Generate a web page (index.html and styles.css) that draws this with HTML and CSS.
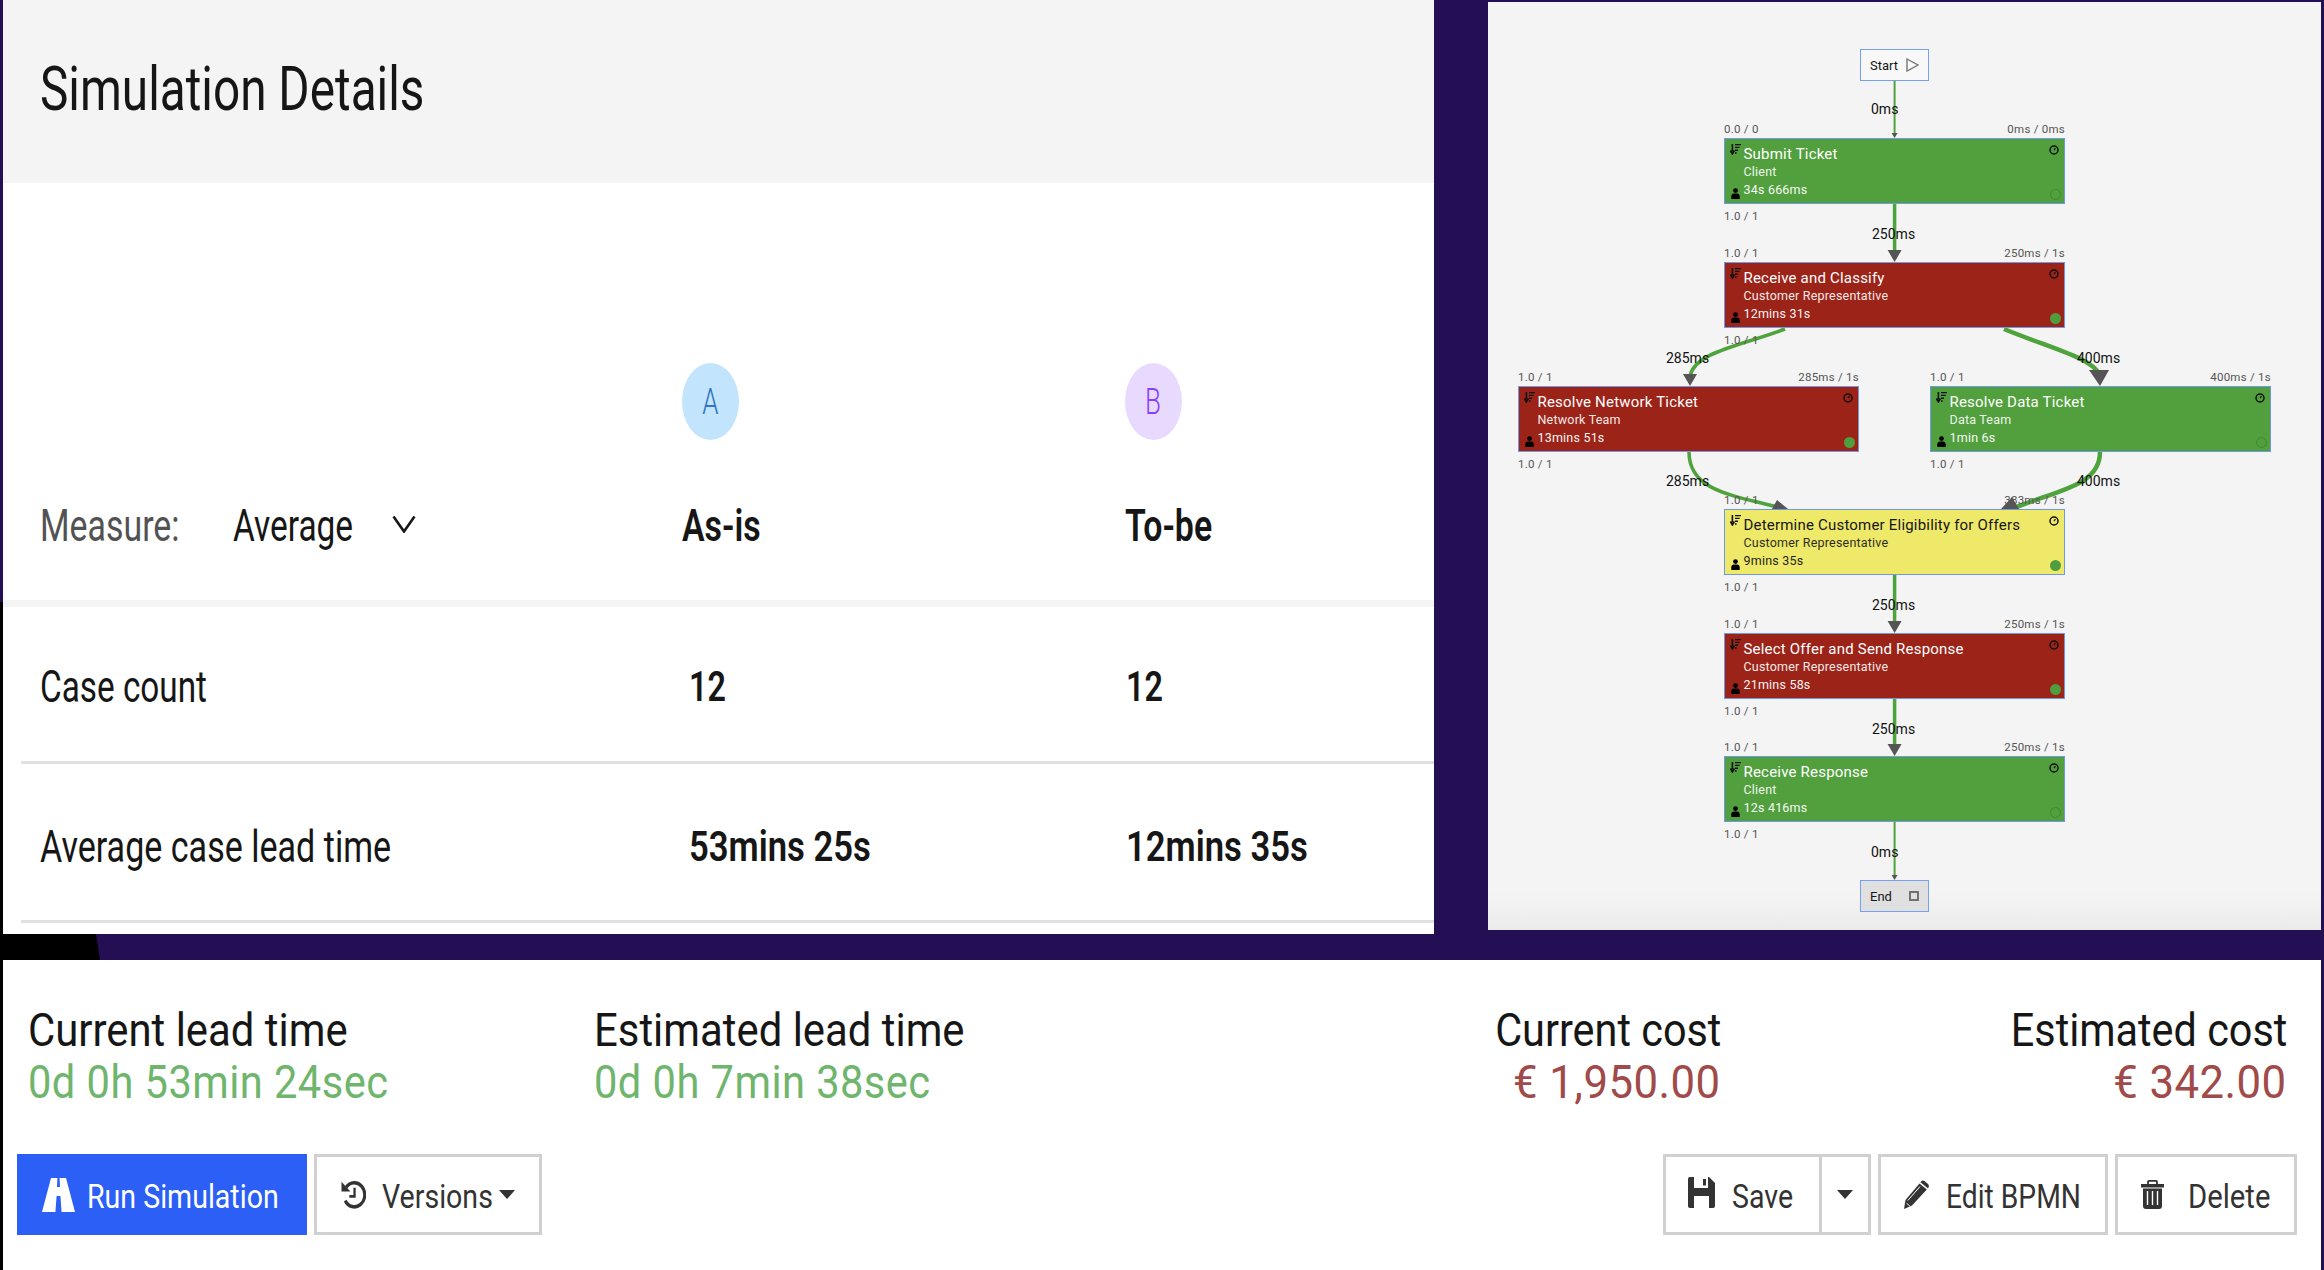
FILE: index.html
```html
<!DOCTYPE html>
<html lang="en">
<head>
  <meta charset="UTF-8" />
  <title>Simulation Details</title>
  <link rel="stylesheet" href="styles.css">
</head>
<body>

  <svg class="icon-defs" xmlns="http://www.w3.org/2000/svg">
    <symbol id="i-sort" viewBox="0 0 11 11">
      <path d="M2.4 0v7.5M0.4 6.5l2 3.5 2-3.5" fill="none" stroke="currentColor" stroke-width="1.6"/>
      <path d="M5 0.6h6M5 3.4h4.6M5 6.2h3M5 9h1.6" stroke="currentColor" stroke-width="1.4"/>
    </symbol>
    <symbol id="i-clock" viewBox="0 0 10 10">
      <circle cx="5" cy="5" r="4" fill="none" stroke="currentColor" stroke-width="1.5"/>
      <path d="M5 5.2l1.4-2" stroke="currentColor" stroke-width="1.2"/>
    </symbol>
    <symbol id="i-user" viewBox="0 0 9 11">
      <circle cx="4.5" cy="2.6" r="2.4" fill="currentColor"/>
      <path d="M0.3 11V8.2Q0.3 5.6 3 5.4H6Q8.7 5.6 8.7 8.2V11Z" fill="currentColor"/>
    </symbol>
  </svg>

  <div class="edge-strip"></div>
  <div class="corner"></div>

  <div class="top">
    <!-- Simulation details table -->
    <section class="details">
      <header class="details-head">
        <h1 class="sq title">Simulation Details</h1>
      </header>
      <div class="row row-head">
        <div class="measure">
          <span class="sq measure-label">Measure:</span>
          <span class="sq measure-value">Average</span>
          <svg class="chevron" viewBox="0 0 24 18"><path d="M1.5 1.5L12 16.5 22.5 1.5" fill="none" stroke="#161616" stroke-width="2.6"/></svg>
        </div>
        <div class="scenario">
          <div class="badge badge-a"><span class="sq">A</span></div>
          <span class="sq head-name">As-is</span>
        </div>
        <div class="scenario">
          <div class="badge badge-b"><span class="sq">B</span></div>
          <span class="sq head-name">To-be</span>
        </div>
      </div>
      <div class="row row-data">
        <div class="cell"><span class="sq row-name">Case count</span></div>
        <div class="cell cell-a"><span class="sq num">12</span></div>
        <div class="cell cell-b"><span class="sq num">12</span></div>
      </div>
      <div class="row row-data row-last">
        <div class="cell"><span class="sq row-name">Average case lead time</span></div>
        <div class="cell cell-a"><span class="sq num">53mins 25s</span></div>
        <div class="cell cell-b"><span class="sq num">12mins 35s</span></div>
      </div>
    </section>

    <!-- Process diagram -->
    <section class="diagram">
      <svg class="edges" viewBox="1488 2 833 928">
        <g fill="none" stroke="#4fa33c">
          <path d="M1894.6 81V134" stroke-width="2"/>
          <path d="M1894.6 204V252" stroke-width="3.5"/>
          <path d="M1785 329C1740 346 1695 352 1690 376" stroke-width="3.5"/>
          <path d="M2004 329C2050 348 2092 358 2099 374" stroke-width="4.5"/>
          <path d="M1689 452C1689 490 1730 495 1778 507" stroke-width="3.5"/>
          <path d="M2100 452C2100 485 2060 490 2016 507" stroke-width="4.5"/>
          <path d="M1894.6 575V623" stroke-width="3.5"/>
          <path d="M1894.6 699V746" stroke-width="3.5"/>
          <path d="M1894.6 822V876" stroke-width="2"/>
        </g>
        <g fill="#555">
          <path d="M1891.6 133H1897.6L1894.6 138Z"/>
          <path d="M1887.6 250H1901.6L1894.6 262Z"/>
          <path d="M1683 374H1697L1690 386Z"/>
          <path d="M2089 370H2109L2100 386Z"/>
          <path d="M1777 500L1788 509H1772Z"/>
          <path d="M2012 497L2019 509H2001Z"/>
          <path d="M1887.6 621H1901.6L1894.6 633Z"/>
          <path d="M1887.6 744H1901.6L1894.6 756Z"/>
          <path d="M1891.6 875H1897.6L1894.6 880Z"/>
        </g>
      </svg>

      <span class="edge-label el-1">0ms</span>
      <span class="edge-label el-2">250ms</span>
      <span class="edge-label el-3">285ms</span>
      <span class="edge-label el-4">400ms</span>
      <span class="edge-label el-5">285ms</span>
      <span class="edge-label el-6">400ms</span>
      <span class="edge-label el-7">250ms</span>
      <span class="edge-label el-8">250ms</span>
      <span class="edge-label el-9">0ms</span>

      <div class="terminal terminal-start">
        <span>Start</span>
        <svg class="terminal-icon" viewBox="0 0 13 14"><path d="M1 1L12 7 1 13Z" fill="none" stroke="#777" stroke-width="1.4"/></svg>
      </div>

      <div class="node green n-submit">
        <span class="meta meta-tl">0.0 / 0</span><span class="meta meta-tr">0ms / 0ms</span><span class="meta meta-bl">1.0 / 1</span>
        <svg class="ic-sort"><use href="#i-sort"/></svg>
        <svg class="ic-clock"><use href="#i-clock"/></svg>
        <svg class="ic-user"><use href="#i-user"/></svg>
        <div class="node-title">Submit Ticket</div>
        <div class="node-role">Client</div>
        <div class="node-time">34s 666ms</div>
        <i class="dot dot-off"></i>
      </div>

      <div class="node red n-receive">
        <span class="meta meta-tl">1.0 / 1</span><span class="meta meta-tr">250ms / 1s</span><span class="meta meta-bl">1.0 / 1</span>
        <svg class="ic-sort"><use href="#i-sort"/></svg>
        <svg class="ic-clock"><use href="#i-clock"/></svg>
        <svg class="ic-user"><use href="#i-user"/></svg>
        <div class="node-title">Receive and Classify</div>
        <div class="node-role">Customer Representative</div>
        <div class="node-time">12mins 31s</div>
        <i class="dot"></i>
      </div>

      <div class="node red n-network">
        <span class="meta meta-tl">1.0 / 1</span><span class="meta meta-tr">285ms / 1s</span><span class="meta meta-bl">1.0 / 1</span>
        <svg class="ic-sort"><use href="#i-sort"/></svg>
        <svg class="ic-clock"><use href="#i-clock"/></svg>
        <svg class="ic-user"><use href="#i-user"/></svg>
        <div class="node-title">Resolve Network Ticket</div>
        <div class="node-role">Network Team</div>
        <div class="node-time">13mins 51s</div>
        <i class="dot"></i>
      </div>

      <div class="node green n-data">
        <span class="meta meta-tl">1.0 / 1</span><span class="meta meta-tr">400ms / 1s</span><span class="meta meta-bl">1.0 / 1</span>
        <svg class="ic-sort"><use href="#i-sort"/></svg>
        <svg class="ic-clock"><use href="#i-clock"/></svg>
        <svg class="ic-user"><use href="#i-user"/></svg>
        <div class="node-title">Resolve Data Ticket</div>
        <div class="node-role">Data Team</div>
        <div class="node-time">1min 6s</div>
        <i class="dot dot-off"></i>
      </div>

      <div class="node yellow n-determine">
        <span class="meta meta-tl">1.0 / 1</span><span class="meta meta-tr">383ms / 1s</span><span class="meta meta-bl">1.0 / 1</span>
        <svg class="ic-sort"><use href="#i-sort"/></svg>
        <svg class="ic-clock"><use href="#i-clock"/></svg>
        <svg class="ic-user"><use href="#i-user"/></svg>
        <div class="node-title">Determine Customer Eligibility for Offers</div>
        <div class="node-role">Customer Representative</div>
        <div class="node-time">9mins 35s</div>
        <i class="dot"></i>
      </div>

      <div class="node red n-select">
        <span class="meta meta-tl">1.0 / 1</span><span class="meta meta-tr">250ms / 1s</span><span class="meta meta-bl">1.0 / 1</span>
        <svg class="ic-sort"><use href="#i-sort"/></svg>
        <svg class="ic-clock"><use href="#i-clock"/></svg>
        <svg class="ic-user"><use href="#i-user"/></svg>
        <div class="node-title">Select Offer and Send Response</div>
        <div class="node-role">Customer Representative</div>
        <div class="node-time">21mins 58s</div>
        <i class="dot"></i>
      </div>

      <div class="node green n-response">
        <span class="meta meta-tl">1.0 / 1</span><span class="meta meta-tr">250ms / 1s</span><span class="meta meta-bl">1.0 / 1</span>
        <svg class="ic-sort"><use href="#i-sort"/></svg>
        <svg class="ic-clock"><use href="#i-clock"/></svg>
        <svg class="ic-user"><use href="#i-user"/></svg>
        <div class="node-title">Receive Response</div>
        <div class="node-role">Client</div>
        <div class="node-time">12s 416ms</div>
        <i class="dot dot-off"></i>
      </div>

      <div class="terminal terminal-end">
        <span>End</span>
        <svg class="terminal-icon" viewBox="0 0 10 10"><rect x="1" y="1" width="8" height="8" fill="none" stroke="#666" stroke-width="1.8"/></svg>
      </div>
    </section>
  </div>

  <!-- Summary and actions -->
  <section class="summary">
    <div class="stats">
      <div class="stat">
        <div><span class="sq stat-label">Current lead time</span></div>
        <div><span class="sq stat-value good">0d 0h 53min 24sec</span></div>
      </div>
      <div class="stat">
        <div><span class="sq stat-label">Estimated lead time</span></div>
        <div><span class="sq stat-value good">0d 0h 7min 38sec</span></div>
      </div>
      <div class="stat stat-right">
        <div><span class="sq stat-label">Current cost</span></div>
        <div><span class="sq stat-value bad">€ 1,950.00</span></div>
      </div>
      <div class="stat stat-right">
        <div><span class="sq stat-label">Estimated cost</span></div>
        <div><span class="sq stat-value bad">€ 342.00</span></div>
      </div>
    </div>

    <div class="actions">
      <button class="btn btn-primary btn-run">
        <svg class="btn-icon ic-road" viewBox="0 0 33 34"><path d="M9 0H24L33 34H0Z" fill="#fff"/><path d="M15.4 0H17.6L18 9H15ZM14.6 18H18.4L19.6 34H13.4Z" fill="#2b5ff6"/></svg>
        <span class="sq btn-text">Run Simulation</span>
      </button>
      <button class="btn btn-versions">
        <svg class="btn-icon ic-history" viewBox="0 0 24 24" preserveAspectRatio="none">
          <path d="M5 6A10 10 0 1 1 4 17" fill="none" stroke="#333" stroke-width="3"/>
          <path d="M0.5 1.5L9 9.5H0.5Z" fill="#333"/>
          <path d="M13 6.5V13.5H8" fill="none" stroke="#333" stroke-width="2.2"/>
        </svg>
        <span class="sq btn-text">Versions</span>
        <i class="caret"></i>
      </button>

      <div class="actions-right">
        <div class="btn-group">
          <button class="btn btn-save">
            <svg class="btn-icon ic-save" viewBox="0 0 27 31">
              <path d="M0 2Q0 0 2 0H21L27 6V29Q27 31 25 31H2Q0 31 0 29Z" fill="#333"/>
              <path d="M6 0H20V11H6ZM6 19H21V31H6Z" fill="#fff"/>
              <path d="M15 2H18V8.500H15Z" fill="#333"/>
            </svg>
            <span class="sq btn-text">Save</span>
          </button>
          <button class="btn btn-split"><i class="caret"></i></button>
        </div>
        <button class="btn btn-edit">
          <svg class="btn-icon ic-pencil" viewBox="0 0 25 29">
            <path d="M0 29L1.500 20 15.500 3.500 22.800 9.500 8 25.500Z" fill="#333"/>
            <path d="M17 1.500Q18.500 -0.300 20.500 1L24 4Q25.500 5.500 24.500 7.500L23.800 8.300 16.400 2.300Z" fill="#333"/>
            <path d="M3.800 20.500L16 6.500" stroke="#fff" stroke-width="1"/>
            <path d="M2.600 23.300L5.800 26" stroke="#fff" stroke-width="1"/>
          </svg>
          <span class="sq btn-text">Edit BPMN</span>
        </button>
        <button class="btn btn-delete">
          <svg class="btn-icon ic-trash" viewBox="0 0 23 29">
            <path d="M7 4V2Q7 0.800 8.500 0.800H14.500Q16 0.800 16 2V4" fill="none" stroke="#333" stroke-width="1.800"/>
            <path d="M0 4H23V7.500H0Z" fill="#333"/>
            <path d="M2 8.500H21V26Q21 29 18 29H5Q2 29 2 26Z" fill="#333"/>
            <path d="M6.500 11V25M11.500 11V25M16.500 11V25" stroke="#fff" stroke-width="1.400"/>
          </svg>
          <span class="sq btn-text">Delete</span>
        </button>
      </div>
    </div>
  </section>

</body>
</html>
```

FILE: styles.css
```css
* {
  box-sizing: border-box;
}
html, body {
  height: 100%;
}
body {
  margin: 0;
  height: 1270px;
  overflow: hidden;
  position: relative;
  background: #240f55;
  color: #161616;
  font-family: Roboto, "Noto Sans", sans-serif;
}
.icon-defs {
  display: none;
}
.edge-strip {
  position: absolute;
  left: 0;
  top: 602px;
  bottom: 0;
  width: 3px;
  background: #000;
}
.corner {
  position: absolute;
  left: 0;
  top: 934px;
  width: 100px;
  height: 26px;
  background: #000;
  clip-path: polygon(0 0, 96px 0, 100px 26px, 0 26px);
}

/* squeezed text, the screenshot was stretched sideways */
.sq {
  display: inline-block;
  white-space: nowrap;
  transform-origin: left center;
}

.top {
  display: flex;
  height: 960px;
}

/* ----- details table ----- */
.details {
  width: 1431px;
  height: 934px;
  margin-left: 3px;
  background: #fff;
}
.details-head {
  height: 183px;
  padding: 51px 0 0 37px;
  background: #f4f4f4;
}
.title {
  margin: 0;
  font-size: 62px;
  font-weight: 400;
  line-height: 76px;
  transform: scaleX(.77);
}
.row {
  display: grid;
  grid-template-columns: 679px 443px 1fr;
}
.row-head {
  height: 424px;
  padding-bottom: 44px;
  align-items: end;
  border-bottom: 7px solid #f4f4f4;
}
.measure {
  display: flex;
  align-items: center;
  height: 60px;
  padding-left: 37px;
  font-size: 44px;
}
.measure-label {
  width: 193px;
  color: #525252;
  transform: scaleX(.77);
}
.measure-value {
  width: 159px;
  transform: scaleX(.76);
}
.chevron {
  width: 24px;
  height: 18px;
  margin-top: -5px;
}
.scenario {
  display: flex;
  flex-direction: column;
  align-items: flex-start;
}
.badge {
  display: flex;
  align-items: center;
  justify-content: center;
  width: 57px;
  height: 77px;
  margin-bottom: 56px;
  border-radius: 50%;
  font-size: 36px;
  font-weight: 300;
}
.badge .sq {
  transform: scaleX(.72);
  transform-origin: center;
}
.badge-a {
  background: #c2e4fc;
  color: #2f74c0;
}
.badge-b {
  background: #e8daff;
  color: #8a3ffc;
}
.head-name {
  font-size: 44px;
  font-weight: 600;
  line-height: 60px;
  transform: scaleX(.77);
}
.row-data {
  height: 157px;
  margin-left: 18px;
  border-bottom: 3px solid #e0e0e0;
  align-items: center;
  grid-template-columns: 661px 442px 1fr;
}
.row-last {
  height: 159px;
}
.cell {
  padding-top: 5px;
  padding-left: 19px;
}
.row-last .cell {
  padding-top: 8px;
}
.row-data .cell-a {
  padding-left: 7px;
}
.row-data .cell-b {
  padding-left: 2px;
}
.row-name {
  font-size: 45px;
  transform: scaleX(.74);
}
.row-last .row-name {
  transform: scaleX(.757);
}
.num {
  font-size: 42px;
  font-weight: 600;
  transform: scaleX(.77);
}
.row-last .num {
  transform: scaleX(.825);
}

/* ----- diagram ----- */
.diagram {
  position: relative;
  width: 833px;
  height: 928px;
  margin: 2px 0 0 54px;
  background: linear-gradient(#f4f4f4 890px, #ebebeb);
}
.edges {
  position: absolute;
  left: 0;
  top: 0;
  width: 833px;
  height: 928px;
}
.edge-label {
  position: absolute;
  font-size: 14px;
  line-height: 18px;
  color: #111;
}
.el-1 { left: 383px; top: 98px; }
.el-2 { left: 384px; top: 223px; }
.el-3 { left: 178px; top: 347px; }
.el-4 { left: 589px; top: 347px; }
.el-5 { left: 178px; top: 470px; }
.el-6 { left: 589px; top: 470px; }
.el-7 { left: 384px; top: 594px; }
.el-8 { left: 384px; top: 718px; }
.el-9 { left: 383px; top: 841px; }

.terminal {
  position: absolute;
  left: 372px;
  display: flex;
  align-items: center;
  justify-content: space-between;
  width: 69px;
  height: 32px;
  padding: 0 9px;
  border: 1.5px solid #78a0f0;
  font-size: 13px;
}
.terminal-start {
  top: 47px;
  background: #f8f8f8;
}
.terminal-end {
  top: 878px;
  background: #e0e0e0;
}
.terminal-icon {
  width: 13px;
  height: 14px;
}
.terminal-end .terminal-icon {
  width: 10px;
  height: 10px;
}

.node {
  position: absolute;
  width: 341px;
  height: 66px;
  padding: 5.500px 0 0 18.500px;
  border: 1.500px solid #6f99e8;
  color: #fff;
}
.green { background: #529f3e; }
.red { background: #9c2318; }
.yellow { background: #efe96a; color: #161616; }

.n-submit { left: 236px; top: 136px; }
.n-receive { left: 236px; top: 260px; }
.n-network { left: 30px; top: 384px; }
.n-data { left: 442px; top: 384px; }
.n-determine { left: 236px; top: 507px; }
.n-select { left: 236px; top: 631px; }
.n-response { left: 236px; top: 754px; }

.node-title {
  font-size: 15px;
  line-height: 18.500px;
  letter-spacing: .2px;
  white-space: nowrap;
}
.node-role {
  font-size: 12.500px;
  line-height: 17px;
  letter-spacing: .2px;
  opacity: .9;
}
.node-time {
  font-size: 12.500px;
  line-height: 19px;
  letter-spacing: .2px;
  opacity: .95;
}
.meta {
  position: absolute;
  font-size: 11.500px;
  line-height: 14px;
  letter-spacing: .25px;
  color: #555;
  white-space: nowrap;
}
.meta-tl { left: -1px; top: -17px; }
.meta-tr { right: -1px; top: -17px; }
.meta-bl { left: -1px; top: 70px; }

.ic-sort {
  position: absolute;
  left: 5px;
  top: 5px;
  width: 11px;
  height: 11px;
  color: #111;
}
.ic-clock {
  position: absolute;
  right: 5px;
  top: 6px;
  width: 10px;
  height: 10px;
  color: #111;
}
.ic-user {
  position: absolute;
  left: 6px;
  top: 49px;
  width: 9px;
  height: 11px;
  color: #000;
}
.dot {
  position: absolute;
  right: 3px;
  top: 50px;
  width: 11px;
  height: 11px;
  border-radius: 50%;
  background: #4f9e3e;
}
.dot-off {
  background: transparent;
  border: 1px solid #3f8a30;
}

/* ----- summary ----- */
.summary {
  height: 310px;
  margin: 0 3px;
  padding: 44px 24px 0 14px;
  background: #fff;
}
.stats {
  display: grid;
  grid-template-columns: 566px 562px 565px 566px;
  padding-left: 11px;
  margin-bottom: 46px;
}
.stat-label,
.stat-value {
  font-size: 46px;
  line-height: 52px;
}
.stat-label {
  transform: scaleX(.91);
}
.stat-right .stat-label {
  transform: scaleX(.9);
}
.stat-value {
  transform: scaleX(.905);
  letter-spacing: .5px;
}
.stat-value.bad {
  transform: scaleX(.95);
}
.stat-right {
  text-align: right;
}
.stat-right .sq {
  transform-origin: right center;
}
.good { color: #6fb56d; }
.bad { color: #a04a4a; }

.actions {
  display: flex;
  gap: 7px;
}
.actions-right {
  display: flex;
  gap: 7px;
  margin-left: auto;
}
.btn-group {
  display: flex;
}
.btn {
  display: flex;
  align-items: center;
  height: 81px;
  padding: 0;
  background: #fff;
  border: 3px solid #d0d0d0;
  color: #333;
  font-family: inherit;
  font-size: 34px;
}
.btn-primary {
  background: #2b5ff6;
  border-color: #2b5ff6;
  color: #fff;
}
.btn-text {
  margin-top: 2px;
  transform: scaleX(.84);
}
.btn-icon {
  flex: none;
}
.btn-run { width: 290px; padding-left: 22px; }
.ic-road { width: 33px; height: 34px; margin-right: 12px; }
.btn-versions { width: 228px; padding-left: 24px; }
.ic-history { width: 25px; height: 29px; margin-right: 16px; }
.btn-versions .btn-text { width: 117px; }
.btn-save { width: 156px; padding-left: 22px; border-right-width: 0; }
.ic-save { width: 27px; height: 31px; margin-right: 17px; margin-top: -5px; }
.btn-split { width: 52px; justify-content: center; padding-left: 0; }
.btn-edit { width: 230px; padding-left: 23px; }
.ic-pencil { width: 25px; height: 29px; margin-right: 17px; }
.btn-edit .btn-text { transform: scaleX(.83); }
.btn-delete { width: 182px; padding-left: 23px; }
.ic-trash { width: 23px; height: 29px; margin-right: 24px; }
.btn-delete .btn-text { transform: scaleX(.86); }
.caret {
  width: 0;
  height: 0;
  border-left: 8.500px solid transparent;
  border-right: 8.500px solid transparent;
  border-top: 9px solid #333;
}
```
